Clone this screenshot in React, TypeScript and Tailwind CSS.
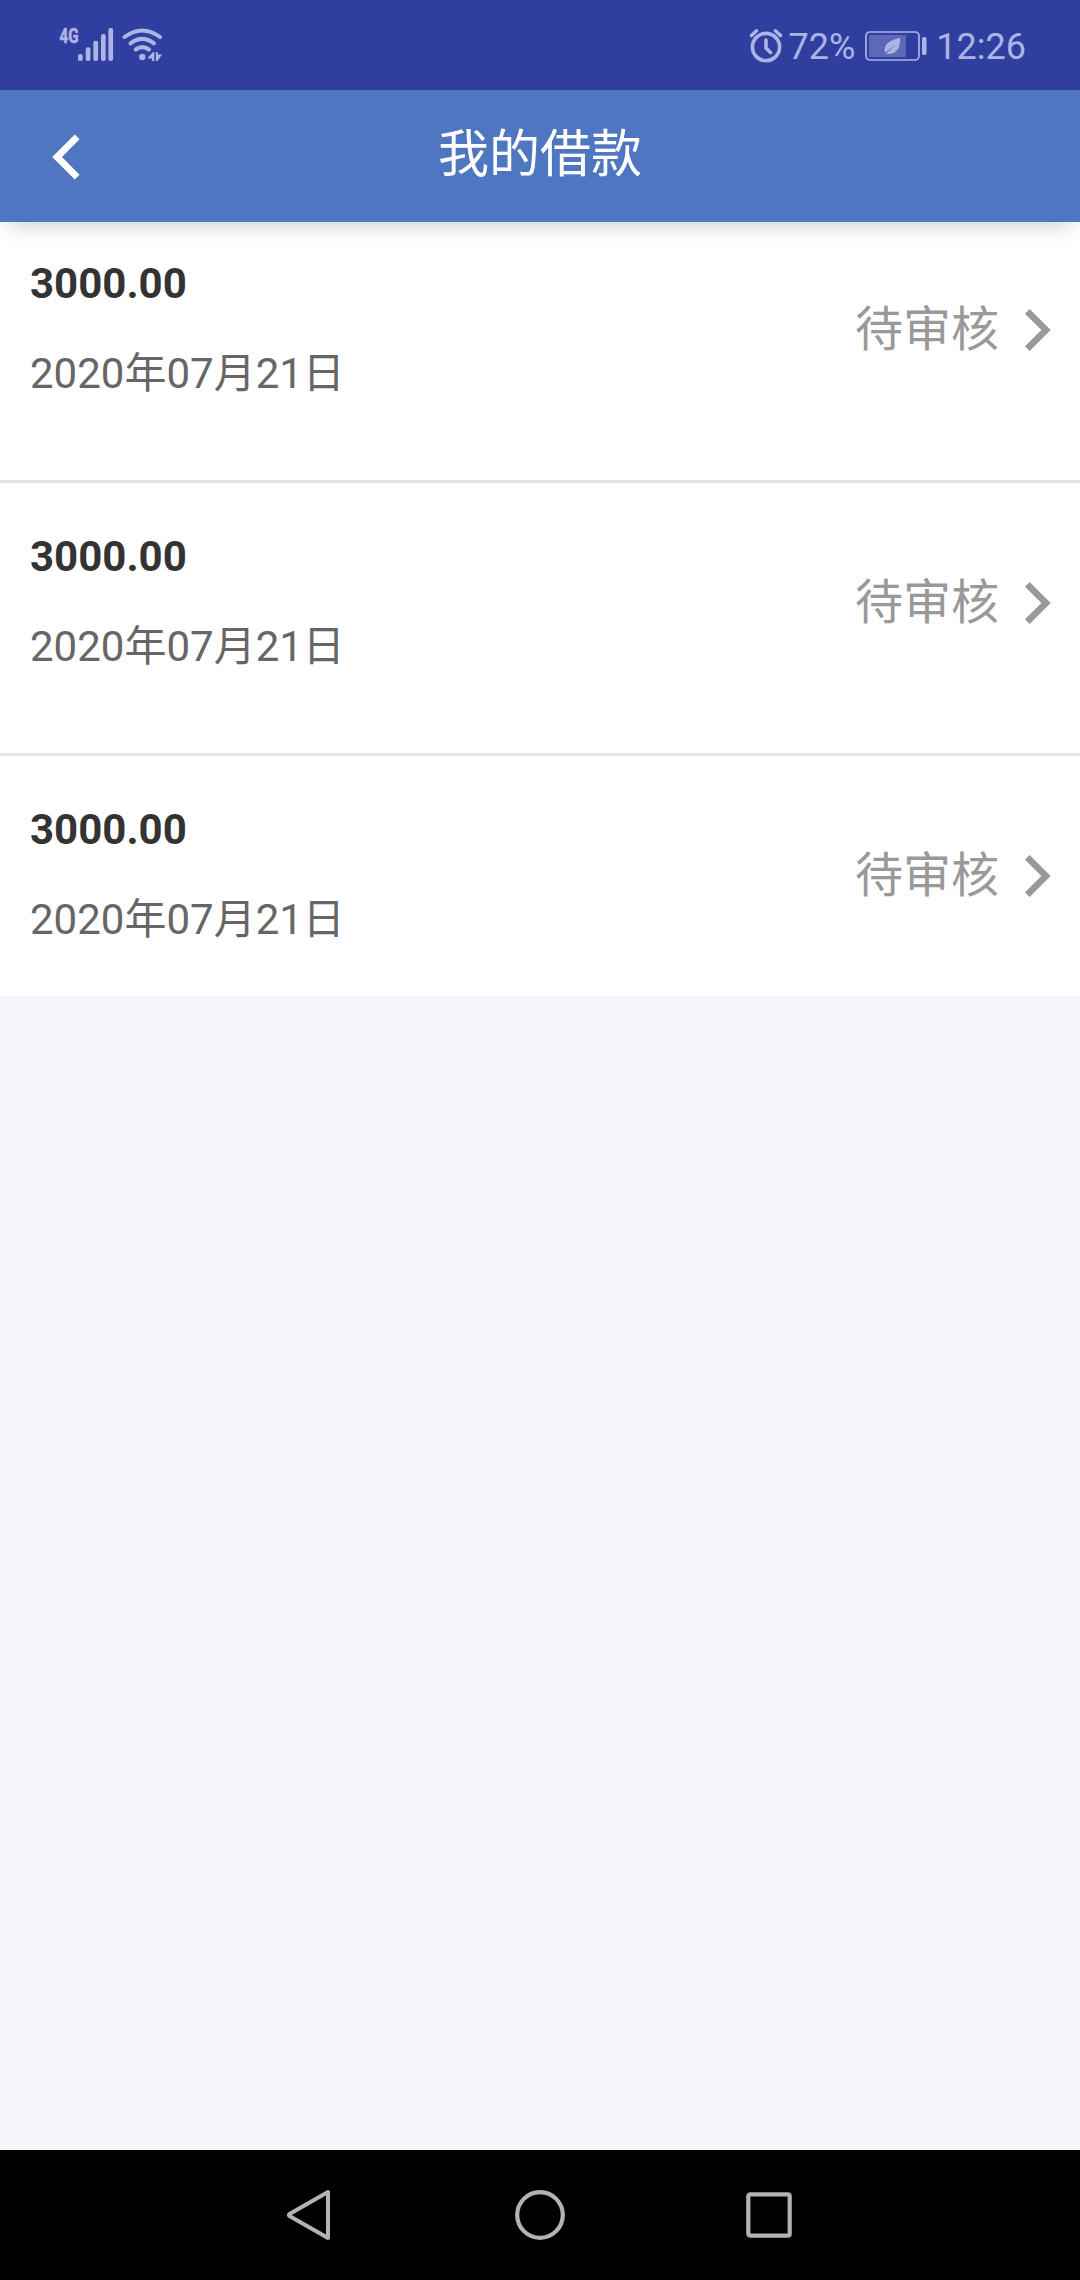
import React from 'react';

interface Loan {
  id: number;
  amount: string;
  date: string;
  status: string;
}

const loans: Loan[] = [
  { id: 1, amount: '3000.00', date: '2020年07月21日', status: '待审核' },
  { id: 2, amount: '3000.00', date: '2020年07月21日', status: '待审核' },
  { id: 3, amount: '3000.00', date: '2020年07月21日', status: '待审核' },
];

export default function App() {
  return (
    <div className="flex h-[2280px] w-[1080px] flex-col bg-[#f4f4f9] font-['Roboto','Noto_Sans_CJK_SC',sans-serif]">
      <StatusBar />
      <Header title="我的借款" />
      <main className="flex-1">
        <ul className="bg-white">
          {loans.map((loan) => (
            <LoanRow key={loan.id} loan={loan} />
          ))}
        </ul>
      </main>
      <NavBar />
    </div>
  );
}

function StatusBar() {
  return (
    <div className="flex h-[90px] shrink-0 items-center justify-between bg-[#303f9f] pl-14 pr-[54px] text-[#acb4e6]">
      {/* Signal + wifi */}
      <svg width="112" height="44" viewBox="56 23 112 44" fill="currentColor">
        <text x="59.5" y="42.5" fontSize="20" fontWeight="700" textLength="19" lengthAdjust="spacingAndGlyphs" stroke="currentColor" strokeWidth="0.6">4G</text>
        <rect x="78" y="54" width="4.7" height="7" rx="2" />
        <rect x="85.7" y="47.3" width="4.7" height="13.7" rx="2" />
        <rect x="93.4" y="40.7" width="4.7" height="20.3" rx="2" />
        <rect x="101" y="34" width="4.7" height="27" rx="2" />
        <rect x="108.4" y="28" width="4.7" height="33" rx="2" />
        <g fill="none" stroke="currentColor" strokeWidth="4" strokeLinecap="round">
          <path d="M124.5 37Q142.3 24 160 37" />
          <path d="M130.5 43.3Q142.3 34.5 154 43.3" />
          <path d="M135.7 49.5Q142.3 44.8 149 49.5" />
        </g>
        <circle cx="142.3" cy="57" r="3.2" />
        <path d="M148 57.5L153 52H154.3V61H152V58.5H148ZM155.8 52H157.8V54.5H162L157.5 61H155.8Z" />
      </svg>
      <div className="flex items-center pt-0.5">
        <svg className="mr-1.5" width="34" height="36" viewBox="0 0 34 36" fill="none" stroke="currentColor" strokeWidth="3.6" strokeLinecap="round">
          <circle cx="17" cy="19" r="13.6" />
          <path d="M17 12V20L21.5 24.5M2.5 7.5L7.5 2.8M31.5 7.5L26.5 2.8" />
        </svg>
        <span className="mt-0.5 text-[36px] leading-none">72%</span>
        <svg className="ml-2.5 mr-[9px]" width="62" height="30" viewBox="0 0 62 30" fill="none">
          <rect x="1" y="1" width="53" height="28" rx="4" stroke="currentColor" strokeWidth="1.7" />
          <rect x="4" y="4" width="37" height="22" rx="1" fill="#5c68b8" />
          <path d="M35 7C25 9 18 13 20 22L30 14L21 23C31 24 36 17 35 7Z" fill="currentColor" />
          <rect x="57" y="6" width="4.5" height="18" rx="2" fill="currentColor" />
        </svg>
        <span className="mt-0.5 text-[36px] leading-none">12:26</span>
      </div>
    </div>
  );
}

function Header({ title }: { title: string }) {
  return (
    <header className="z-10 grid h-[132px] shrink-0 grid-cols-3 items-center bg-[#4f77c1] text-white shadow-[0_14px_18px_-8px_rgba(0,0,0,0.16)]">
      <button className="ml-[52px] mt-px w-7" aria-label="返回">
        <svg width="28" height="46" viewBox="0 0 28 46" fill="none" stroke="currentColor" strokeWidth="6.8">
          <path d="M25.2 2.8L5 23L25.2 43.2" />
        </svg>
      </button>
      <h1 className="pb-[3px] text-center text-[51px] leading-none">{title}</h1>
    </header>
  );
}

function LoanRow({ loan }: { loan: Loan }) {
  return (
    <li className="flex h-[273px] items-start justify-between border-b-[3px] border-[#e5e5e5] pl-[30px] pr-[29px] pt-[46px] first:h-[261px] first:pt-[34px] last:h-60 last:border-b-0">
      <div className="flex flex-col text-[42px] leading-[56px]">
        <span className="font-bold text-[#333]">{loan.amount}</span>
        <span className="mt-[34px] text-[#666]">{loan.date}</span>
      </div>
      <div className="mt-[38px] flex items-center gap-[25px] text-[#999]">
        <span className="text-[48px] leading-[72px]">{loan.status}</span>
        <svg width="27" height="44" viewBox="0 0 27 44" fill="none" stroke="currentColor" strokeWidth="6.6">
          <path d="M3.3 3.3L22 22L3.3 40.7" />
        </svg>
      </div>
    </li>
  );
}

function NavBar() {
  return (
    <nav className="flex h-[130px] shrink-0 items-center bg-black pl-[286px] text-[#b3b3b3]">
      <svg width="46" height="52" viewBox="0 0 46 52" fill="none" stroke="currentColor" strokeWidth="4" strokeLinejoin="round">
        <path d="M42 3V49L3.5 27Q2.5 26 3.5 25Z" />
      </svg>
      <svg className="ml-[182px]" width="52" height="52" viewBox="0 0 52 52" fill="none" stroke="currentColor" strokeWidth="4.2">
        <circle cx="26" cy="26" r="22.8" />
      </svg>
      <svg className="ml-[179px]" width="48" height="48" viewBox="0 0 48 48" fill="none" stroke="currentColor" strokeWidth="4.2">
        <rect x="3.3" y="3.3" width="41.4" height="41.4" rx="2" />
      </svg>
    </nav>
  );
}
